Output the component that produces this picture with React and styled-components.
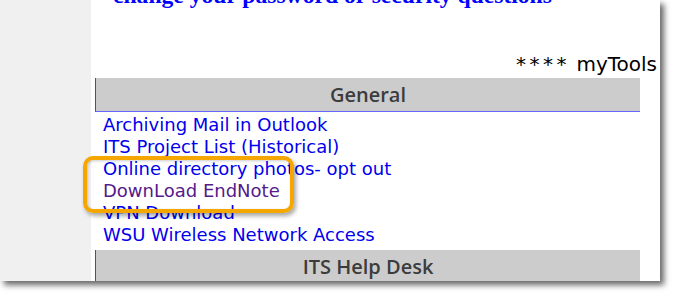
import React from "react";
import styled, { createGlobalStyle } from "styled-components";

const Global = createGlobalStyle`
  html, body { margin: 0; padding: 0; background: #ffffff; }
  #root { width: 675px; height: 296px; }
`;

const Page = styled.div`
  position: relative;
  width: 675px;
  height: 296px;
  overflow: hidden;
  background: #ffffff;
`;

const Frame = styled.div`
  display: flex;
  width: 660px;
  height: 281px;
  overflow: hidden;
  box-shadow: 4px 4px 6px rgba(0, 0, 0, 0.6);
`;

const Sidebar = styled.div`
  width: 91px;
  flex: none;
  background: #f0f0f0;
`;

const Content = styled.div`
  flex: 1;
  display: flex;
  flex-direction: column;
  background: #ffffff;
  padding: 0 3px 0 4px;
`;

const Title = styled.div`
  margin: -17px 0 0 18px;
  font-family: "Liberation Serif", "Times New Roman", serif;
  font-weight: bold;
  font-size: 23.6px;
  line-height: 24px;
  color: #0000ff;
  white-space: nowrap;
`;

const ToolsLine = styled.div`
  margin-top: 46px;
  text-align: right;
  font-family: "DejaVu Sans", Verdana, sans-serif;
  font-size: 20px;
  line-height: 22px;
  color: #000000;
  white-space: nowrap;
`;

const Stars = styled.span`
  letter-spacing: 3.5px;
`;

const SectionHeader = styled.div`
  margin: ${(p) => p.$top}px 17px 0 0;
  height: 33px;
  display: flex;
  align-items: center;
  justify-content: center;
  background: #cccccc;
  border-left: 1px solid #8b4513;
  border-bottom: 1px solid ${(p) => (p.$underline ? "#6666ff" : "#cccccc")};
  font-family: "Open Sans", sans-serif;
  font-weight: 600;
  font-size: 20px;
  line-height: 33px;
  color: #3c3c3c;
  flex: none;
`;

const LinkList = styled.ul`
  list-style: none;
  margin: 2px 0 0 0;
  padding: 0 0 0 8px;
`;

const Item = styled.li`
  font-family: "DejaVu Sans", Verdana, sans-serif;
  font-size: 18px;
  line-height: 22px;
  white-space: nowrap;
`;

const Link = styled.a`
  color: ${(p) => (p.$visited ? "#551a8b" : "#0000ee")};
  text-decoration: none;
`;

const Highlight = styled.div`
  position: absolute;
  left: 83px;
  top: 156px;
  width: 211px;
  height: 57px;
  box-sizing: border-box;
  border: 4px solid #f5a700;
  border-radius: 10px;
  box-shadow: 2px 3px 4px rgba(0, 0, 0, 0.35), inset 1px 1px 3px rgba(0, 0, 0, 0.2);
  pointer-events: none;
`;

const links = [
  { label: "Archiving Mail in Outlook" },
  { label: "ITS Project List (Historical)" },
  { label: "Online directory photos- opt out" },
  { label: "DownLoad EndNote", visited: true },
  { label: "VPN Download" },
  { label: "WSU Wireless Network Access" },
];

export default function App() {
  return (
    <Page>
      <Global />
      <Frame>
        <Sidebar />
        <Content>
          <Title>change your password or security questions</Title>
          <ToolsLine>
            <Stars>****</Stars> myTools
          </ToolsLine>
          <SectionHeader $top={3} $underline>General</SectionHeader>
          <LinkList>
            {links.map((l) => (
              <Item key={l.label}>
                <Link href="#" $visited={l.visited}>{l.label}</Link>
              </Item>
            ))}
          </LinkList>
          <SectionHeader $top={4}>ITS Help Desk</SectionHeader>
        </Content>
      </Frame>
      <Highlight />
    </Page>
  );
}
